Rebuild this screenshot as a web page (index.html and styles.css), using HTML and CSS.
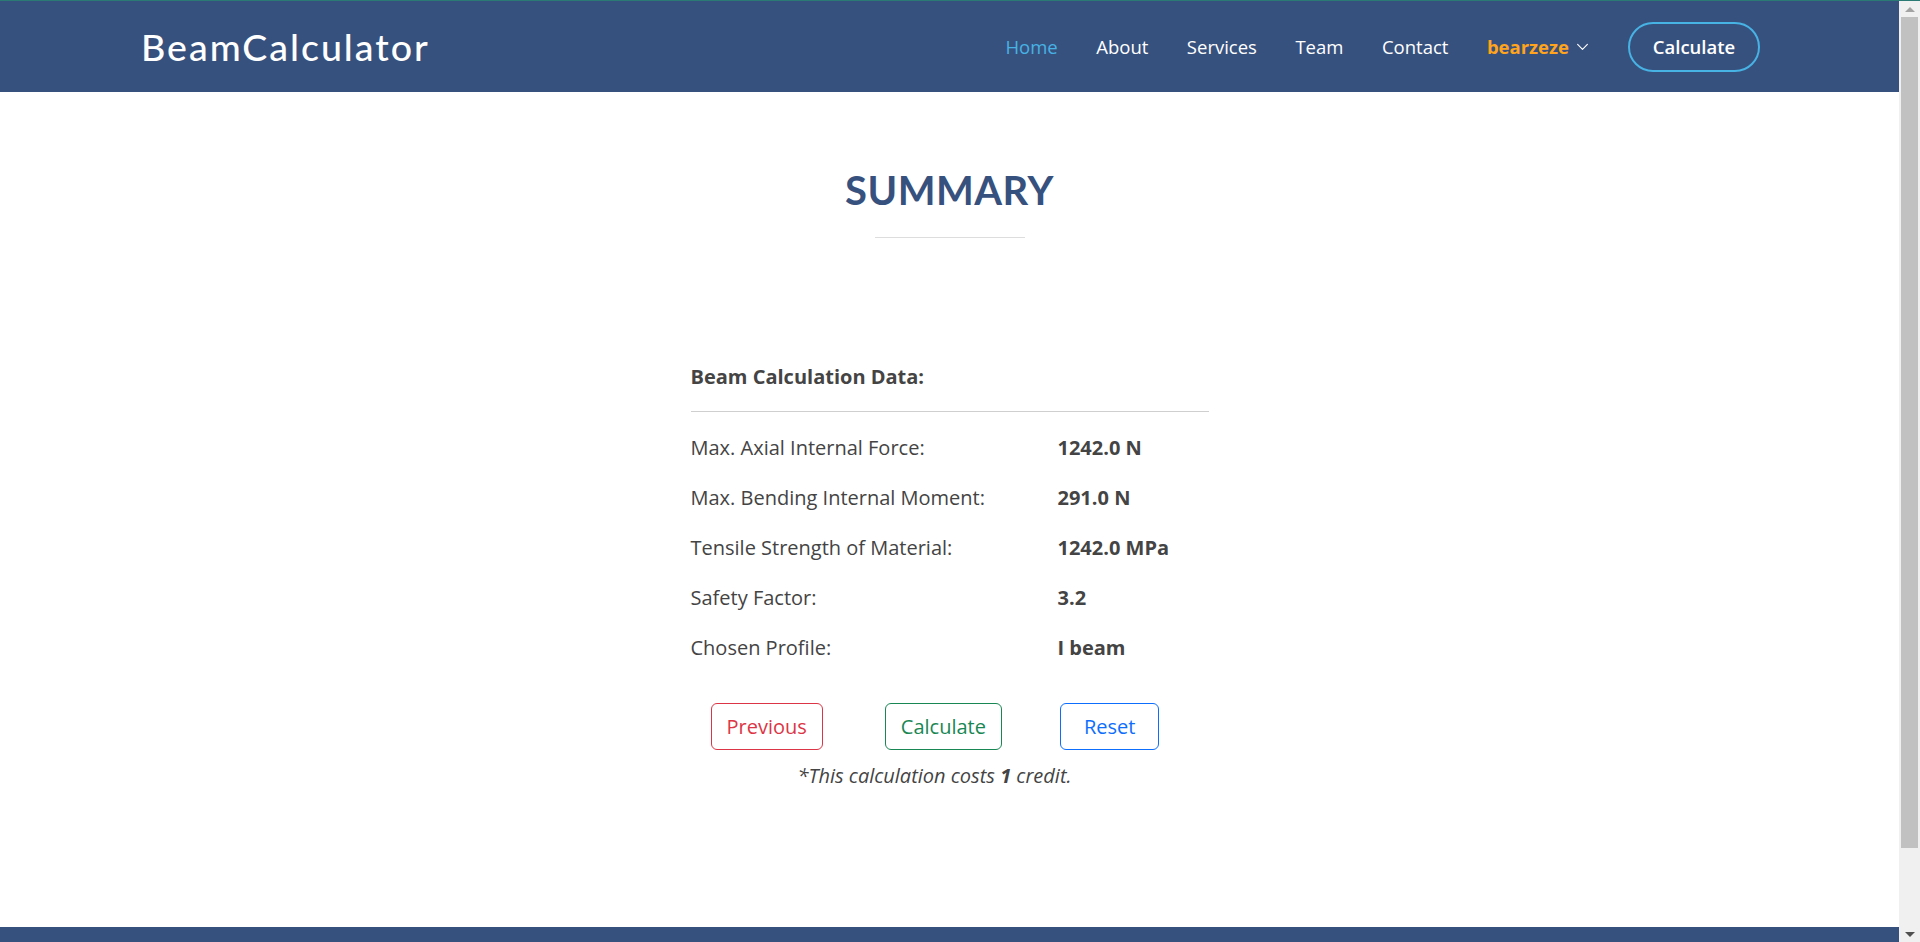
FILE: index.html
```html
<!DOCTYPE html>
<html lang="en">
<head>
<meta charset="utf-8">
<title>BeamCalculator - Summary</title>
<link rel="stylesheet" href="styles.css">
</head>
<body>
<header class="header">
  <div class="header-inner">
    <a class="logo" href="#">BeamCalculator</a>
    <nav class="navbar">
      <ul class="nav-list">
        <li><a class="nav-link active" href="#">Home</a></li>
        <li><a class="nav-link" href="#">About</a></li>
        <li><a class="nav-link" href="#">Services</a></li>
        <li><a class="nav-link" href="#">Team</a></li>
        <li><a class="nav-link" href="#">Contact</a></li>
        <li><a class="nav-link user" href="#">bearzeze<svg class="chev" width="13" height="13" viewBox="0 0 16 16"><path d="M2 5.5l6 6 6-6" fill="none" stroke="#ffffff" stroke-width="1.4" stroke-linecap="round" stroke-linejoin="round"/></svg></a></li>
        <li><a class="getstarted" href="#">Calculate</a></li>
      </ul>
    </nav>
  </div>
</header>

<main class="summary">
  <div class="section-title">
    <h2>Summary</h2>
    <div class="title-line"></div>
  </div>

  <div class="data-box">
    <div class="data-head">Beam Calculation Data:</div>
    <div class="data-rows">
      <div class="data-row"><span class="label">Max. Axial Internal Force:</span><span class="value">1242.0 N</span></div>
      <div class="data-row"><span class="label">Max. Bending Internal Moment:</span><span class="value">291.0 N</span></div>
      <div class="data-row"><span class="label">Tensile Strength of Material:</span><span class="value">1242.0 MPa</span></div>
      <div class="data-row"><span class="label">Safety Factor:</span><span class="value">3.2</span></div>
      <div class="data-row"><span class="label">Chosen Profile:</span><span class="value">I beam</span></div>
    </div>
    <div class="actions">
      <div class="btn-group">
        <button class="btn btn-danger">Previous</button>
        <button class="btn btn-success">Calculate</button>
        <button class="btn btn-primary">Reset</button>
      </div>
      <p class="note">*This calculation costs <b>1</b> credit.</p>
    </div>
  </div>
</main>

<footer class="footer"></footer>

<div class="scrollbar" aria-hidden="true">
  <div class="sb-btn"><span class="arrow-up"></span></div>
  <div class="sb-track"><div class="sb-thumb"></div></div>
  <div class="sb-btn"><span class="arrow-down"></span></div>
</div>
</body>
</html>
```
FILE: styles.css
```css
html, body {
  margin: 0;
  padding: 0;
}

body {
  margin-right: 21px;
  font-family: "Open Sans", "Noto Sans", sans-serif;
  color: #444444;
  background: #ffffff;
}

a {
  text-decoration: none;
}

/* simulated browser scrollbar */
.scrollbar {
  position: fixed;
  top: 0;
  right: 0;
  width: 21px;
  height: 100vh;
  display: flex;
  flex-direction: column;
  background: #f0f0f0;
  border-top: 1px solid #2b7a74;
  box-sizing: border-box;
}

.sb-btn {
  height: 16px;
  display: flex;
  align-items: center;
  justify-content: center;
}

.arrow-up {
  width: 0;
  height: 0;
  border-left: 5px solid transparent;
  border-right: 5px solid transparent;
  border-bottom: 5px solid #a3a3a3;
}

.arrow-down {
  width: 0;
  height: 0;
  border-left: 5px solid transparent;
  border-right: 5px solid transparent;
  border-top: 5px solid #505050;
}

.sb-track {
  flex: 1;
  padding: 0 2px;
}

.sb-thumb {
  height: 831px;
  background: #c1c1c1;
}

.header {
  background: #37517e;
  border-top: 1px solid #2b7a74;
}

.header-inner {
  height: 91px;
  display: flex;
  align-items: center;
  justify-content: space-between;
  padding: 0 139px 0 141px;
}

.logo {
  font-family: "Lato", "Open Sans", sans-serif;
  font-size: 37.5px;
  font-weight: 500;
  letter-spacing: 2px;
  color: #ffffff;
  line-height: 1;
}

.nav-list {
  display: flex;
  align-items: center;
  list-style: none;
  margin: 0;
  padding: 0;
}

.nav-link {
  display: flex;
  align-items: center;
  margin-left: 38.5px;
  font-size: 18.5px;
  color: #ffffff;
  white-space: nowrap;
}

.nav-link.active {
  color: #47b2e4;
}

.nav-link.user {
  color: #ffa41c;
  font-weight: 700;
}

.chev {
  margin-left: 7px;
}

.getstarted {
  display: block;
  margin-left: 39px;
  width: 128px;
  height: 46px;
  line-height: 46px;
  text-align: center;
  border: 2px solid #47b2e4;
  border-radius: 50px;
  color: #ffffff;
  font-size: 18.5px;
  font-weight: 600;
}

.summary {
  padding: 74px 0 136px;
}

.section-title {
  text-align: center;
}

.section-title h2 {
  margin: 0;
  font-family: "Lato", "Open Sans", sans-serif;
  font-size: 40px;
  line-height: 48px;
  font-weight: 700;
  letter-spacing: 0.5px;
  text-transform: uppercase;
  color: #37517e;
}

.title-line {
  width: 150px;
  height: 1px;
  margin: 23px auto 0;
  background: #dddddd;
}

.data-box {
  width: 518px;
  margin: 124px auto 0;
  font-size: 20px;
  line-height: 30px;
}

.data-head {
  font-weight: 700;
  padding-bottom: 19px;
  border-bottom: 1px solid #cfcfcf;
}

.data-rows {
  margin-top: 11px;
}

.data-row {
  display: grid;
  grid-template-columns: 367px 1fr;
  align-items: center;
  height: 50px;
}

.value {
  font-weight: 700;
}

.actions {
  margin-top: 30px;
  padding-right: 30px;
  text-align: center;
}

.btn-group {
  display: flex;
  justify-content: flex-start;
  padding-left: 20px;
}

.btn {
  font-family: "Open Sans", "Noto Sans", sans-serif;
  font-size: 20px;
  line-height: 30px;
  padding: 7.5px 15px;
  background: #ffffff;
  border: 1px solid;
  border-radius: 6px;
}

.btn-danger {
  color: #dc3545;
  border-color: #dc3545;
}

.btn-success {
  margin-left: 62px;
  color: #198754;
  border-color: #198754;
}

.btn-primary {
  margin-left: 58px;
  padding: 7.5px 23px;
  color: #0d6efd;
  border-color: #0d6efd;
}

.note {
  margin: 11px 0 0;
  font-style: italic;
}

.footer {
  height: 94px;
  background: #37517e;
}
```
